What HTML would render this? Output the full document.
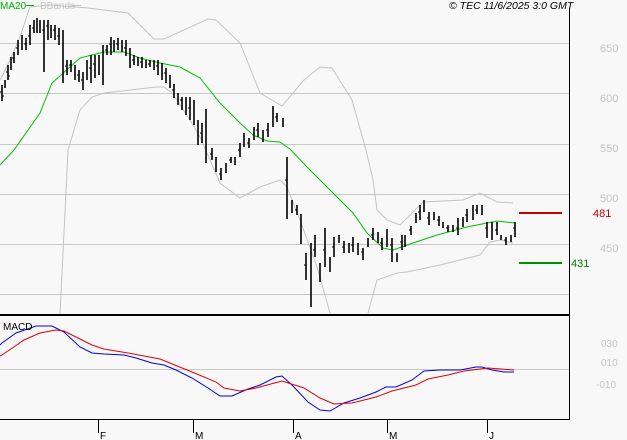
<!DOCTYPE html>
<html><head><meta charset="utf-8"><style>
html,body{margin:0;padding:0;background:#f8f8f8;}
svg{display:block;font-family:"Liberation Sans",sans-serif;}
</style></head><body>
<svg width="627" height="440" viewBox="0 0 627 440" xmlns="http://www.w3.org/2000/svg">
<rect width="627" height="440" fill="#f8f8f8"/>
<g stroke="#c8c8c8" stroke-width="1">
<path d="M0 43.5H569M0 93.5H569M0 144.5H569M0 194.5H569M0 244.5H569M0 294.5H569M0 369.5H569"/>
</g>
<g fill="none" stroke="#c4c4c4" stroke-width="1">
<polyline points="0,80 10,60 20,37 30,7 50,5 88,8 128,13 154,39 164,39 208,19 216,20 240,43 260,93 282,106 304,80 320,67 332,68 352,100 366,150 373,180 377,210 387,220 400,225 423,202 463,200 480,193 497,202 513,203"/>
<polyline points="60,315 68,150 80,110 92,97 104,93 156,87 164,87 172,93 190,120 200,137 220,183 240,198 260,187 280,180 287,187 300,220 317,267 330,313"/>
<polyline points="368,313 377,280 397,273 407,272 440,265 480,255 490,242 500,240 513,243"/>
</g>
<polyline fill="none" stroke="#00c000" stroke-width="1" points="0,165 14,150 40,113 52,83 80,58 104,52 124,52 140,58 160,63 180,67 200,78 220,103 240,123 253,135 267,141 280,142 290,149 307,167 333,193 353,213 367,233 383,248 393,250 413,243 437,235 467,227 497,221 515,223"/>
<path fill="none" stroke="#000" stroke-width="1.6" d="M2 85V101M5 80V88M8 65V80M11 57V70M14 52V63M18 40V55M22 35V50M26 38V50M30 25V45M34 20V33M37 18V33M40 20V33M44 20V72M48 20V40M51 25V38M55 25V40M59 28V45M63 30V83M67 60V75M71 60V72M75 65V80M79 70V82M83 72V90M87 60V80M91 55V83M95 55V78M99 55V75M103 45V85M107 45V55M111 37V55M114 40V52M118 38V50M122 40V52M126 40V56M130 48V68M134 55V65M138 57V66M142 57V68M146 60V68M150 60V67M154 60V70M158 60V75M162 63V80M166 68V83M170 75V88M174 84V98M178 93V105M182 97V110M186 97V115M190 97V120M194 100V125M198 120V145M202 123V143M206 109V163M212 148V160M216 157V172M221 168V180M226 163V173M231 157V163M235 157V165M240 143V157M244 133V147M249 138V148M254 127V140M258 123V137M263 130V142M268 123V137M273 106V127M277 113V122M283 118V127M287 157V219M292 200V213M297 205V215M301 214V244M306 253V280M311 243V307M315 235V257M320 263V282M325 228V267M330 257V272M334 237V257M339 235V243M344 241V253M349 243V253M353 237V252M358 243V255M363 248V260M368 238V247M373 228V240M378 232V243M382 238V250M387 229V247M392 238V262M397 253V262M402 235V250M405 235V247M411 226V235M416 213V223M420 205V220M424 200V212M429 212V225M434 212V220M439 216V226M443 222V228M448 225V232M453 225V232M458 218V235M463 217V227M467 209V222M473 205V220M477 205V214M482 205V215M487 222V238M492 222V240M497 222V235M501 235V240M506 237V245M511 235V242M515 222V237"/>
<path fill="none" stroke="#000" stroke-width="1" d="M0 92H2M2 96H4M6 72H8M8 76H10M12 58H14M16 48H18M24 44H26M28 36H30M32 28H34M42 30H44M46 26H48M53 30H55M57 36H59M65 66H67M69 65H71M77 75H79M81 80H83M89 68H91M93 64H95M105 50H107M109 44H111M116 44H118M124 48H126M132 60H134M140 62H142M148 64H150M156 66H158M164 73H166M172 90H174M180 100H182M188 108H190M200 133H202M210 154H212M219 174H221M229 160H231M238 150H240M247 143H249M256 130H258M266 130H268M275 117H277M285 180H287M295 210H297M304 265H306M313 250H315M323 250H325M332 247H334M342 247H344M351 245H353M361 252H363M371 235H373M380 243H382M390 245H392M400 242H402M409 230H411M418 212H420M427 218H429M437 220H439M446 228H448M456 228H458M465 215H467M475 210H477M485 228H487M495 230H497M504 240H506M513 228H515"/>
<path stroke="#000" stroke-width="1" d="M569.5 8V420"/>
<path stroke="#000" stroke-width="2" d="M0 315H570"/>
<path stroke="#000" stroke-width="1" d="M0 419.5H570M98.5 419V433M193.5 419V433M293.5 419V433M387.5 419V433M487.5 419V433"/>
<g font-size="10" fill="#000">
<text x="100" y="439">F</text><text x="195" y="439">M</text><text x="295" y="439">A</text><text x="389" y="439">M</text><text x="489" y="439">J</text>
</g>
<polyline fill="none" stroke="#0000e0" stroke-width="1" points="0,345 2,343 16,333 36,326 52,326 64,332 80,347 92,353 104,354 124,355 136,358 152,363 164,365 176,370 192,378 208,388 220,396 232,396 248,389 260,385 276,377 282,376 292,385 308,402 320,410 330,411 344,403 360,398 376,392 386,387 396,387 412,380 424,371 440,370 460,370 476,367 482,367 492,370 504,372 514,372"/>
<polyline fill="none" stroke="#e00000" stroke-width="1" points="0,356 2,355 24,340 40,333 56,330 64,331 92,345 104,349 128,353 160,359 192,372 216,382 224,388 240,391 256,388 282,381 304,388 320,398 334,404 352,403 376,397 392,391 416,385 428,379 448,375 464,371 488,368 514,370"/>
<text x="3" y="330" font-size="10" fill="#000">MACD</text>
<text x="0" y="9" font-size="10" fill="#00b000">MA20</text>
<path stroke="#00b000" stroke-width="1" d="M26 5.5H34"/>
<text x="40" y="9" font-size="10" fill="#c4c4c4">BBands</text>
<path stroke="#c4c4c4" stroke-width="1" d="M72 5.5H81"/>
<text x="449" y="9" font-size="10.5" font-style="italic" fill="#000">© TEC 11/6/2025 3:0 GMT</text>
<g font-size="11" fill="#c4c4c4">
<text x="600" y="52">650</text><text x="600" y="102">600</text><text x="600" y="152">550</text><text x="600" y="202">500</text><text x="600" y="252">450</text>
<text x="601" y="347" font-size="10">030</text><text x="601" y="366" font-size="10">010</text><text x="596" y="388" font-size="10">-010</text>
</g>
<path stroke="#c80000" stroke-width="2" d="M519 213H562"/>
<path stroke="#009000" stroke-width="2" d="M519 263H562"/>
<text x="593" y="217" font-size="11" fill="#c80000">481</text>
<text x="571" y="267" font-size="11" fill="#008000">431</text>
</svg>
</body></html>
